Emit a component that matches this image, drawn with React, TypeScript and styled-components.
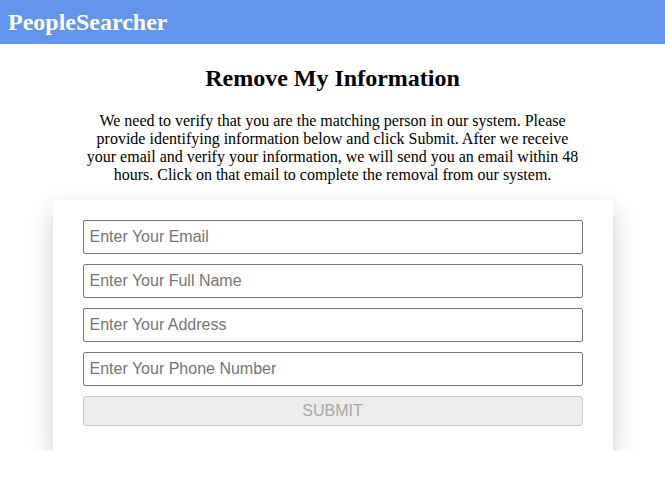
import { createGlobalStyle } from "styled-components"
import styled from "styled-components"

const GlobalStyle = createGlobalStyle`
    body {
        margin: 0;
        background: #ffffff;
        font-family: "Liberation Serif", "Times New Roman", serif;
    }
`

const fields = [
    "Enter Your Email",
    "Enter Your Full Name",
    "Enter Your Address",
    "Enter Your Phone Number",
]

export default function App() {
    return (
        <>
            <GlobalStyle />
            <Header>
                <h1 className="brand">PeopleSearcher</h1>
            </Header>
            <Main>
                <h2 className="title">Remove My Information</h2>
                <p className="intro">
                    We need to verify that you are the matching person in our system. Please
                    provide identifying information below and click Submit. After we receive
                    your email and verify your information, we will send you an email within 48
                    hours. Click on that email to complete the removal from our system.
                </p>
                <Card>
                    {fields.map((f) => (
                        <Field key={f} type="text" placeholder={f} />
                    ))}
                    <SubmitButton disabled>SUBMIT</SubmitButton>
                </Card>
            </Main>
        </>
    )
}

const Header = styled.header`
    height: 44px;
    background-color: #6495ed;
    display: flex;
    align-items: center;
    padding: 0 8px;

    .brand {
        margin: 0;
        color: #ffffff;
        font-size: 24px;
        font-weight: bold;
    }
`

const Main = styled.main`
    display: flex;
    flex-direction: column;
    align-items: center;

    .title {
        margin: 21px 0 0;
        font-size: 24px;
        font-weight: bold;
        color: #000;
    }

    .intro {
        margin: 20px 0 0;
        max-width: 500px;
        text-align: center;
        font-size: 16px;
        line-height: 18px;
        color: #000;
    }
`

const Card = styled.form`
    margin-top: 16px;
    width: 560px;
    box-sizing: border-box;
    padding: 20px 30px 25px;
    background: #ffffff;
    box-shadow: 0 10px 24px rgba(0, 0, 0, 0.2);
    display: flex;
    flex-direction: column;
    gap: 10px;
`

const Field = styled.input`
    height: 34px;
    box-sizing: border-box;
    padding: 0 6px;
    border: 1px solid #767676;
    border-radius: 2px;
    font-family: "Liberation Sans", Arial, sans-serif;
    font-size: 16px;
    color: #000;

    &::placeholder {
        color: #757575;
    }
`

const SubmitButton = styled.button`
    height: 30px;
    border: 1px solid #cccccc;
    border-radius: 3px;
    background: #ececec;
    color: #a8a8a8;
    font-family: "Liberation Sans", Arial, sans-serif;
    font-size: 16px;
`
